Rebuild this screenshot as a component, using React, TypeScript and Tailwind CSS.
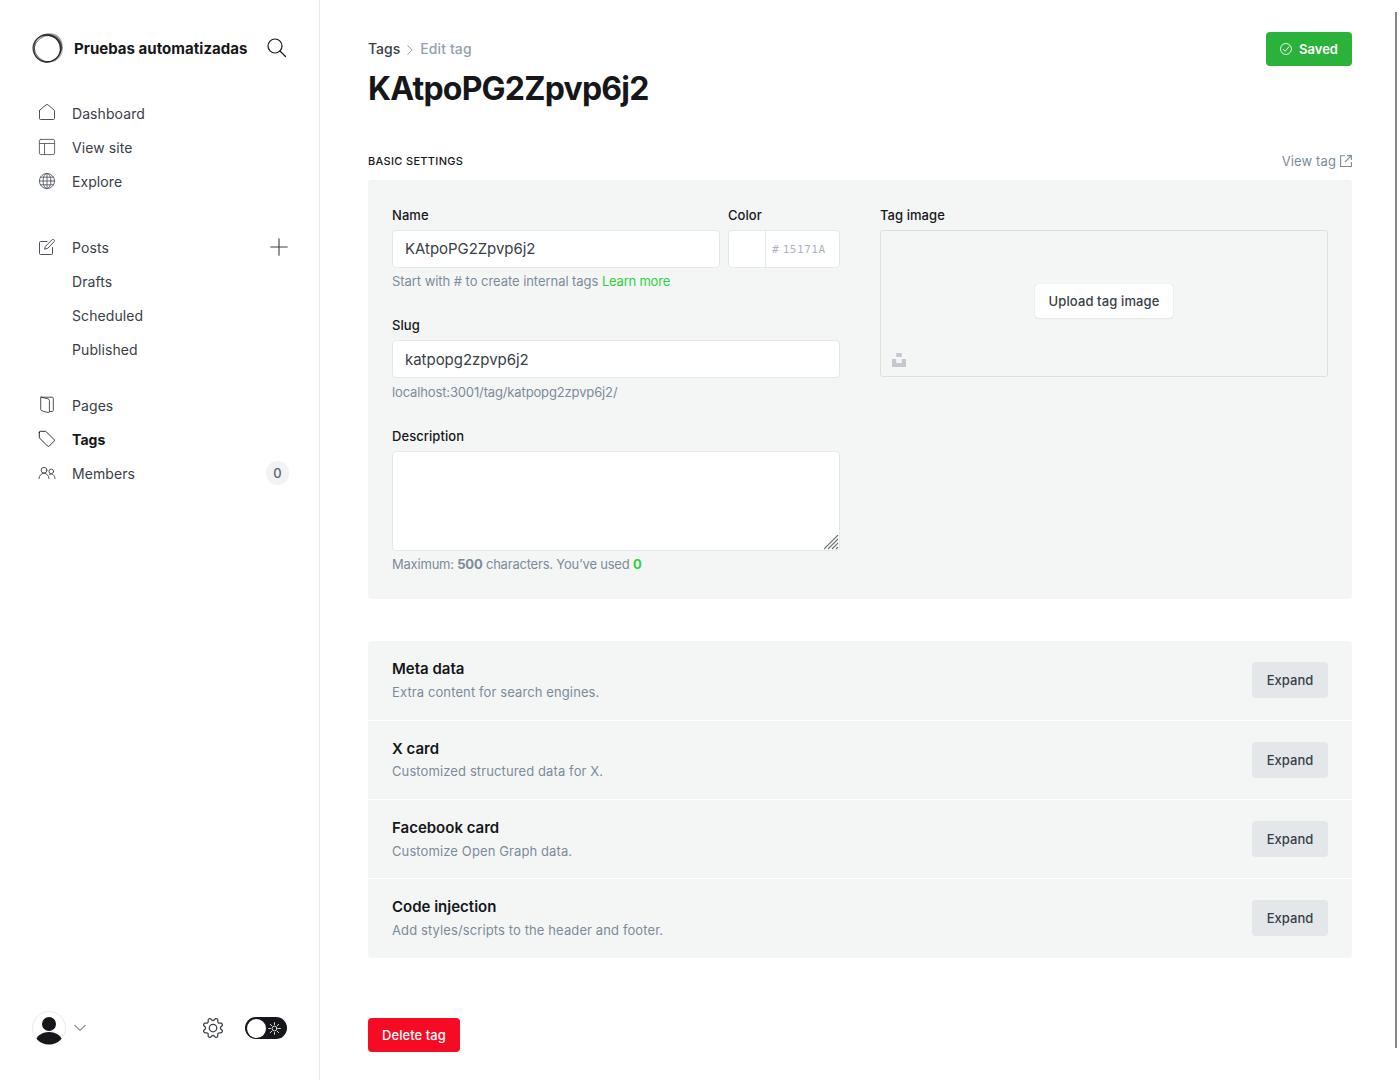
import React from "react";

const stroke = { fill: "none", stroke: "currentColor", strokeLinecap: "round", strokeLinejoin: "round" } as const;

function Icon({ children }: { children: React.ReactNode }) {
  return (
    <svg viewBox="0 0 18 18" className="mr-4 -mt-0.5 size-[18px] shrink-0" {...stroke} strokeWidth={0.9}>
      {children}
    </svg>
  );
}

const icons = {
  home: <path d="M1.5 7v7.500c0 .6.4 1 1 1h13c.6 0 1-.4 1-1V7c0-.4-.2-.8-.5-1.100L10 .9a1.500 1.500 0 0 0-2 0L2 5.900c-.3.300-.5.700-.5 1.100z" />,
  layout: (
    <g opacity=".85">
      <rect x="1.400" y="1.400" width="15.200" height="15.200" rx="1.500" />
      <path d="M1.500 5.500h15M6.500 5.500v11" />
    </g>
  ),
  globe: (
    <g opacity=".85">
      <circle cx="9" cy="9" r="7.600" />
      <path d="M9 1.400v15.200M1.400 9h15.200M2.400 5.200h13.200M2.400 12.800h13.200" />
      <ellipse cx="9" cy="9" rx="3.900" ry="7.600" />
    </g>
  ),
  posts: (
    <>
      <path d="M9 3.500H2.500c-.6 0-1 .4-1 1v11c0 .6.4 1 1 1h11c.6 0 1-.4 1-1V9.500" />
      <path d="M9.300 10.500l-2.700.700.7-2.700L14.100 1.700c.5-.5 1.300-.5 1.800 0l.200.200c.5.500.5 1.300 0 1.800z" />
    </>
  ),
  pages: (
    <>
      <path d="M11.400 15.500h2.900c.6 0 1-.4 1-1V2.200c0-.6-.4-1-1-1H3.300" />
      <path d="M3 1.200l7 1.600c.8.200 1.400.8 1.400 1.500v11.400c0 .6-.5 1-1.100.9l-6.200-1.700c-.8-.2-1.400-.8-1.400-1.500V2c0-.500.100-.700.300-.8z" />
    </>
  ),
  tags: <path d="M1.300 2.300v4.800c0 .4.200.8.400 1.100l8 8c.4.400 1 .4 1.400 0l5.100-5.100c.4-.4.400-1 0-1.400l-8-8c-.3-.3-.7-.4-1.100-.4H2.300c-.6 0-1 .4-1 1z" />,
  members: (
    <>
      <circle cx="6" cy="6.200" r="2.900" />
      <path d="M1 14.500c.2-2.900 2.300-5.200 5-5.200s4.800 2.300 5 5.200" />
      <circle cx="13.300" cy="7.400" r="2.300" />
      <path d="M11.400 10.300c3-1.200 5.400.9 5.600 4.200" />
    </>
  ),
};

function NavItem({ icon, label, bold, right }: { icon?: React.ReactNode; label: string; bold?: boolean; right?: React.ReactNode }) {
  return (
    <a className={`flex h-[34px] items-center pl-[38px] pr-[31px] text-[14px] tracking-[0.08px] ${bold ? "font-bold text-[#15171a]" : "text-[#394047]"}`}>
      {icon ? <Icon>{icon}</Icon> : <span className="w-[34px]" />}
      <span className="-mt-0.5">{label}</span>
      {right}
    </a>
  );
}

function Sidebar() {
  return (
    <nav className="flex h-full w-[320px] shrink-0 flex-col border-r border-[#e6e9eb]">
      <header className="mt-[31px] flex h-[34px] items-center px-8">
        <svg viewBox="0 0 32 32" className="size-8" fill="none" stroke="#15171a">
          <path d="M10 3.800C17-1 27 1.200 29.800 9.500c1.800 5.500.7 10-3.300 14.500 2.500-5 2.300-9.500.5-13.500C24.500 5.500 17 3 10 3.800z" fill="#9b9c9d" stroke="none" />
          <ellipse cx="15.200" cy="16.900" rx="13.900" ry="13.300" strokeWidth="1.300" opacity=".8" transform="rotate(20 16 16)" />
          <ellipse cx="15.200" cy="16.400" rx="14.300" ry="12.800" strokeWidth=".9" opacity=".6" transform="rotate(-40 16 16)" />
          <ellipse cx="16.200" cy="15.800" rx="14.600" ry="13.400" strokeWidth=".7" opacity=".5" transform="rotate(40 16 16)" />
          <ellipse cx="15.800" cy="16.800" rx="13.900" ry="12.900" strokeWidth=".7" opacity=".6" transform="rotate(75 16 16)" />
        </svg>
        <span className="ml-[10px] mt-0.5 text-[15px] font-bold tracking-[0.03px] text-[#15171a]">Pruebas automatizadas</span>
        <svg viewBox="0 0 20 20" className="ml-auto size-5 text-[#15171a]" {...stroke} strokeWidth="1.200">
          <circle cx="8" cy="8" r="7" />
          <path d="M13 13l5.500 5.500" />
        </svg>
      </header>
      <div className="mt-8 flex flex-col">
        <NavItem icon={icons.home} label="Dashboard" />
        <NavItem icon={icons.layout} label="View site" />
        <NavItem icon={icons.globe} label="Explore" />
      </div>
      <div className="mt-8 flex flex-col">
        <NavItem
          icon={icons.posts}
          label="Posts"
          right={
            <svg viewBox="0 0 18 18" className="ml-auto -mt-0.5 size-[18px]" {...stroke} strokeWidth="1.100">
              <path d="M9 .800v16.400M.800 9h16.400" />
            </svg>
          }
        />
        <NavItem label="Drafts" />
        <NavItem label="Scheduled" />
        <NavItem label="Published" />
      </div>
      <div className="mt-[22px] flex flex-col">
        <NavItem icon={icons.pages} label="Pages" />
        <NavItem icon={icons.tags} label="Tags" bold />
        <NavItem
          icon={icons.members}
          label="Members"
          right={<span className="-mt-0.5 -mr-px ml-auto flex h-6 w-[23px] items-center justify-center rounded-full bg-[#f1f3f4] pt-px text-[13px] font-medium text-[#5d6670]">0</span>}
        />
      </div>
      <footer className="mt-auto mb-[35px] flex h-[34px] items-center px-8">
        <svg viewBox="0 0 34 34" className="size-[34px]">
          <clipPath id="avatar"><circle cx="17" cy="17" r="16.500" /></clipPath>
          <circle cx="17" cy="17" r="16.500" fill="#fff" stroke="#e1e4e7" strokeWidth=".8" />
          <circle cx="17" cy="13" r="7" fill="#15171a" />
          <ellipse cx="17" cy="31.500" rx="13.500" ry="10.500" fill="#15171a" clipPath="url(#avatar)" />
        </svg>
        <svg viewBox="0 0 12 8" className="ml-2 h-2 w-3 text-[#394047]" {...stroke} strokeWidth="1">
          <path d="M.8 1.300L6 6.500l5.200-5.200" />
        </svg>
        <svg viewBox="0 0 24 24" className="mr-px ml-auto size-5 text-[#394047]" {...stroke} strokeWidth="1.500">
          <path d="M10.546 2.438a1.957 1.957 0 002.908 0L14.4 1.4a1.959 1.959 0 013.41 1.413l-.071 1.4a1.958 1.958 0 002.051 2.054l1.4-.071a1.959 1.959 0 011.41 3.41l-1.042.94a1.96 1.96 0 000 2.909l1.042.94a1.959 1.959 0 01-1.413 3.41l-1.4-.071a1.958 1.958 0 00-2.056 2.056l.071 1.4A1.959 1.959 0 0114.4 22.6l-.941-1.041a1.959 1.959 0 00-2.908 0L9.606 22.6A1.959 1.959 0 016.2 21.192l.072-1.4a1.958 1.958 0 00-2.056-2.056l-1.4.071A1.958 1.958 0 011.4 14.4l1.041-.94a1.96 1.96 0 000-2.909L1.4 9.606A1.958 1.958 0 012.813 6.2l1.4.071a1.958 1.958 0 002.056-2.060L6.2 2.81A1.959 1.959 0 019.606 1.4z" />
          <circle cx="12" cy="12" r="4.500" />
        </svg>
        <span className="ml-[21px] flex h-[22px] w-[42px] items-center rounded-full bg-[#15171a] pl-[1.5px]">
          <span className="size-[19px] rounded-full bg-white" />
          <svg viewBox="0 0 14 14" className="mt-px ml-[2.5px] size-[13px]" fill="none" stroke="#fff" strokeWidth=".9" strokeLinecap="round">
            <circle cx="7" cy="7" r="2.600" />
            <path d="M7 .700v2M7 11.300v2M.700 7h2M11.300 7h2M2.500 2.500l1.500 1.500M10 10l1.500 1.500M2.500 11.500L4 10M10 4l1.500-1.500" />
          </svg>
        </span>
      </footer>
    </nav>
  );
}

function Label({ children }: { children: React.ReactNode }) {
  return <label className="block h-[30px] pt-[5px] text-[13px] leading-5 font-medium tracking-[0.06px] text-[#15171a]">{children}</label>;
}

function Help({ children, className }: { children: React.ReactNode; className: string }) {
  return <p className={`h-6 text-[13px] leading-5 text-[#7c8b9a] ${className}`}>{children}</p>;
}

function Section({ title, text, className = "h-[79px]", gap = "mt-[3px]" }: { title: string; text: string; className?: string; gap?: string }) {
  return (
    <div className={`flex items-start justify-between px-6 pt-[18px] ${className}`}>
      <div>
        <h4 className="text-[15px] leading-5 font-semibold text-[#15171a]">{title}</h4>
        <p className={`text-[13px] leading-5 tracking-[0.11px] text-[#7c8b9a] ${gap}`}>{text}</p>
      </div>
      <button className="mt-[3px] flex h-9 w-[76px] items-center justify-center rounded-[4px] bg-[#e3e7ea] pt-0.5 text-[13px] font-medium text-[#394047]">Expand</button>
    </div>
  );
}

export default function App() {
  return (
    <div className="flex h-[1080px] w-[1400px] overflow-hidden bg-white font-['Inter',sans-serif] text-[#394047] antialiased">
      <Sidebar />
      <main className="flex w-[1032px] shrink-0 flex-col pl-12">
        <header className="flex items-start justify-between pt-8">
          <div>
            <div className="flex h-8 items-center text-[14px]">
              <span className="font-medium">Tags</span>
              <svg viewBox="0 0 6 10" className="mr-[7px] ml-[7px] mt-[3px] h-2.5 w-1.5 text-[#8593a2]" {...stroke} strokeWidth=".9">
                <path d="M.8 .8L5.200 5 .8 9.200" />
              </svg>
              <span className="font-medium tracking-[0.1px] text-[#92a0b0]">Edit tag</span>
            </div>
            <h1 className="mt-1 text-[32px] leading-[42px] font-bold tracking-[-0.78px] text-[#15171a]">KAtpoPG2Zpvp6j2</h1>
          </div>
          <button className="flex h-[34px] w-[86px] items-center justify-center rounded-[4px] bg-[#2ab23b] text-[13px] font-semibold text-white">
            <svg viewBox="0 0 12 12" className="mr-[7px] size-3" {...stroke} strokeWidth=".9">
              <circle cx="6" cy="6" r="5.500" />
              <path d="M3.200 6.400L5.200 8.300l3.700-4.600" />
            </svg>
            <span className="pt-0.5">Saved</span>
          </button>
        </header>
        <div className="mt-10 flex h-[30px] items-start justify-between">
          <h2 className="pt-px text-[11px] leading-5 font-medium tracking-[0.32px] text-[#15171a] uppercase">Basic settings</h2>
          <a className="flex items-center pt-px text-[13px] leading-5 tracking-[0.12px] text-[#7c8b9a]">
            View tag
            <svg viewBox="0 0 12 12" className="ml-1 size-3" fill="none" stroke="currentColor" strokeWidth="1.100">
              <path d="M5 .800H.600v10.700h10.800V7M7 .600h4.400V5M11.400.600L5 7" />
            </svg>
          </a>
        </div>
        <section className="flex h-[419px] gap-10 rounded-[3px] bg-[#f4f6f6] px-6 pt-5">
          <div className="w-[448px]">
            <div className="flex gap-2">
              <div className="w-[328px]">
                <Label>Name</Label>
                <div className="flex h-[38px] items-center rounded-[4px] border border-[#e3e8e8] bg-white px-3 text-[15px] tracking-[-0.05px]">KAtpoPG2Zpvp6j2</div>
              </div>
              <div className="w-[112px]">
                <Label>Color</Label>
                <div className="flex h-[38px] items-center rounded-[4px] border border-[#e3e8e8] bg-white font-['DejaVu_Sans_Mono',monospace] text-[11px] text-[#abb4be]">
                  <span className="h-full w-[37px] border-r border-[#e3e8e8]" />
                  <span className="ml-1.5 pt-[3px]">#</span>
                  <span className="ml-1 pt-0.5 tracking-[0.55px]">15171A</span>
                </div>
              </div>
            </div>
            <Help className="pt-[3px] tracking-[-0.05px]">
              Start with # to create internal tags <span className="tracking-[-0.22px] text-[#30cf43]">Learn more</span>
            </Help>
            <div className="mt-[18px]">
              <Label>Slug</Label>
              <div className="flex h-[38px] items-center rounded-[4px] border border-[#e3e8e8] bg-white px-3 pt-0.5 text-[15px] tracking-[-0.03px]">katpopg2zpvp6j2</div>
              <Help className="pt-1 tracking-[-0.137px]">localhost:3001/tag/katpopg2zpvp6j2/</Help>
            </div>
            <div className="mt-[19px]">
              <Label>Description</Label>
              <div className="flex h-[100px] items-end justify-end rounded-[4px] border border-[#e3e8e8] bg-white">
                <svg viewBox="0 0 15 15" className="size-[15px]" stroke="#6f6f6f" strokeWidth="1.100">
                  <path d="M0 14L14 0M4 14L14 4M8 14l6-6M12 14l2-2" />
                </svg>
              </div>
              <Help className="pt-[3px] tracking-[-0.21px]">
                Maximum: <b>500</b> characters. You’ve used <b className="text-[#30cf43]">0</b>
              </Help>
            </div>
          </div>
          <div className="w-[448px]">
            <Label>Tag image</Label>
            <div className="relative flex h-[147px] items-center justify-center rounded-[3px] border border-[#dadfe0]">
              <button className="-mt-1.5 flex h-[34px] w-[138px] items-center justify-center rounded-[4px] bg-white pt-0.5 text-[13px] font-medium tracking-[0.12px] shadow-[0_0_1px_rgba(0,0,0,.15),0_1px_2px_rgba(0,0,0,.05)]">Upload tag image</button>
              <svg viewBox="0 0 14 14" className="absolute bottom-[9px] left-[11px] size-3.5" fill="#c5c9cf">
                <path d="M4.200 0h5.600v4H4.200zM0 6h4.200v4h5.600V6H14v8H0z" />
              </svg>
            </div>
          </div>
        </section>
        <section className="mt-[42px] flex flex-col divide-y divide-white rounded-[3px] bg-[#f4f6f6]">
          <Section className="h-20" title="Meta data" text="Extra content for search engines." />
          <Section title="X card" text="Customized structured data for X." gap="mt-0.5" />
          <Section title="Facebook card" text="Customize Open Graph data." />
          <Section title="Code injection" text="Add styles/scripts to the header and footer." />
        </section>
        <button className="mt-[60px] flex h-[34px] w-[92px] items-center justify-center rounded-[4px] bg-[#f50b23] pt-0.5 text-[13px] font-medium tracking-[0.05px] text-white">Delete tag</button>
      </main>
      <div className="mt-3 ml-[43px] h-[1036px] w-0.5 shrink-0 bg-[#838587]" />
    </div>
  );
}
